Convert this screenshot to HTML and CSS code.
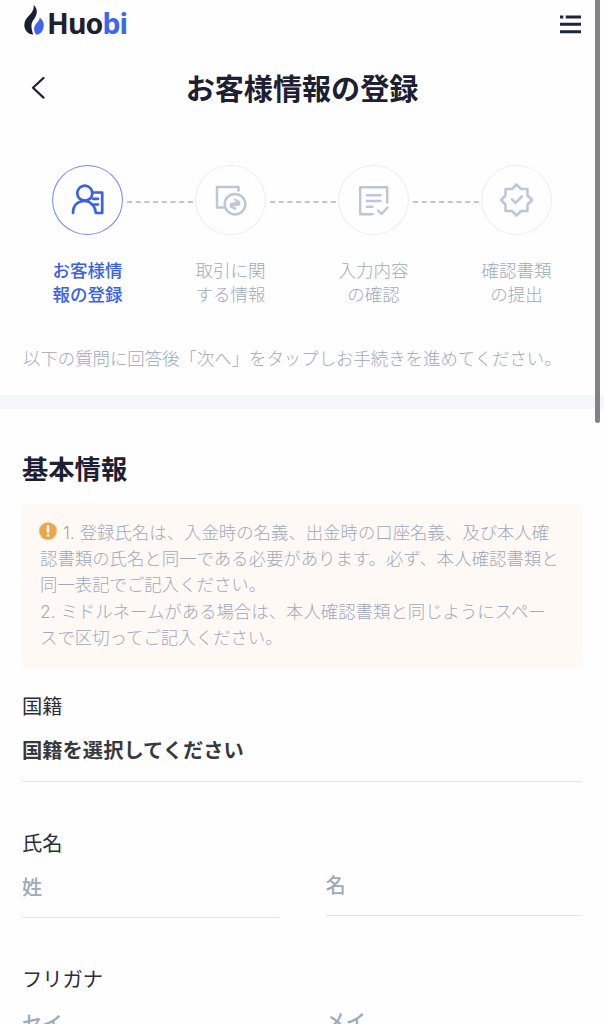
FILE: index.html
```html
<!DOCTYPE html>
<html lang="ja">
<head>
<meta charset="utf-8">
<title>お客様情報の登録</title>
<link rel="stylesheet" href="styles.css">
</head>
<body>
<header class="topbar">
  <div class="logo">
    <svg class="flame" width="22" height="32" viewBox="0 0 22 32"><path fill="#1b2030" d="M9.800 1C13.300 4.500 13.600 8.500 11.600 12.500C9.600 16.200 7.400 18 7.400 21.500C7.500 25 8.300 27.500 9.200 30.800C3.700 30.100.3 26 .3 21.300C.3 17.300 2 14.600 5.100 11.600C8.600 8.200 10.100 5 9.800 1Z"/><path fill="#3d65ee" d="M15.700 13.500C19 16 20.200 19 19.700 22.600C19.200 27.200 16.300 30.600 12.300 30.800C10 27.500 9.200 24.100 11.200 20.900C12.800 18.400 15.300 17.300 15.700 13.500Z"/></svg>
    <span class="wordmark">Huo<span class="wordmark-blue">bi</span></span>
  </div>
  <svg class="menu" width="21" height="19" viewBox="0 0 21 19" fill="#1c2440"><path d="M0 .5h3.300v3H0zM5.700 .5H21v3H5.700zM0 7.800h21v3H0zM0 15.200h21v3H0z"/></svg>
</header>
<div class="titlebar">
  <svg class="back" width="14" height="24" viewBox="0 0 14 24"><path d="M12.500 2L2 11.800L12.500 21.600" fill="none" stroke="#1c2030" stroke-width="2.200" stroke-linecap="round" stroke-linejoin="round"/></svg>
  <h1 class="title">お客様情報の登録</h1>
</div>
<div class="steps">
  <div class="step active">
    <div class="circle"><svg width="34" height="32" viewBox="0 0 34 32" fill="none" stroke="currentColor" stroke-width="2.700" stroke-linecap="round" stroke-linejoin="round"><circle cx="13.800" cy="9.200" r="7.500"/><path d="M2 29C2 21.500 6.500 17 13.300 17C20 17 24 22 25 29H31.200V8.500H22.500M22 14.800H27M20.500 20.500H27"/></svg></div>
    <p class="step-label">お客様情<br>報の登録</p>
  </div>
  <svg class="link" width="66" height="2" viewBox="0 0 66 2"><path d="M0 1h66"/></svg>
  <div class="step">
    <div class="circle"><svg width="34" height="32" viewBox="0 0 34 32" fill="none" stroke="currentColor" stroke-width="2.500" stroke-linecap="round" stroke-linejoin="round"><path d="M24.500 6.500V3H3V23.500H9"/><circle cx="21" cy="20.200" r="10.300"/><path stroke-width="2.200" d="M21.800 15.700L25.800 19.200L16.800 19.200M20.200 24.700L16.200 21.200L25.200 21.200" transform="rotate(-12 21 20.200)"/></svg></div>
    <p class="step-label">取引に関<br>する情報</p>
  </div>
  <svg class="link" width="66" height="2" viewBox="0 0 66 2"><path d="M0 1h66"/></svg>
  <div class="step">
    <div class="circle"><svg width="34" height="32" viewBox="0 0 34 32" fill="none" stroke="currentColor" stroke-width="2.400" stroke-linecap="round" stroke-linejoin="round"><path d="M15.500 30.200H3.200V3.200H30.200V18.500M10 11.300H23.500M10 17H23.500M10 22.800H15.500M21 26.500L24.500 30L30.500 23.500"/></svg></div>
    <p class="step-label">入力内容<br>の確認</p>
  </div>
  <svg class="link" width="66" height="2" viewBox="0 0 66 2"><path d="M0 1h66"/></svg>
  <div class="step">
    <div class="circle"><svg width="34" height="34" viewBox="0 0 34 34" fill="none" stroke="currentColor" stroke-width="2.500" stroke-linecap="round" stroke-linejoin="round"><path d="M16.500 1.500L21 6H27.500V12.500L32 17L27.500 21.500V28H21L16.500 32.500L12 28H5.500V21.500L1 17L5.500 12.500V6H12Z"/><path d="M12 16.300L15.500 19.800L21.800 13.500"/></svg></div>
    <p class="step-label">確認書類<br>の提出</p>
  </div>
</div>
<p class="intro">以下の質問に回答後「次へ」をタップしお手続きを進めてください。</p>
<div class="divider"></div>
<main class="form">
  <h2 class="heading">基本情報</h2>
  <div class="notice">
    <p class="notice-line"><svg class="alert" width="18" height="18" viewBox="0 0 18 18"><circle cx="9" cy="9" r="8.800" fill="#eda64b"/><path d="M9 4.300V9.700M9 13.300V13.500" stroke="#fff" stroke-width="2.600" stroke-linecap="round"/></svg>1. 登録氏名は、入金時の名義、出金時の口座名義、及び本人確</p>
    <p class="notice-line">認書類の氏名と同一である必要があります。必ず、本人確認書類と</p>
    <p class="notice-line">同一表記でご記入ください。</p>
    <p class="notice-line">2. ミドルネームがある場合は、本人確認書類と同じようにスペー</p>
    <p class="notice-line">スで区切ってご記入ください。</p>
  </div>
  <section class="field">
    <div class="label">国籍</div>
    <div class="value selected">国籍を選択してください</div>
  </section>
  <section class="field">
    <div class="label">氏名</div>
    <div class="pair"><div class="value">姓</div><div class="value raised">名</div></div>
  </section>
  <section class="field">
    <div class="label">フリガナ</div>
    <div class="pair"><div class="value">セイ</div><div class="value raised">メイ</div></div>
  </section>
</main>
<div class="scrollbar"></div>
</body>
</html>
```
FILE: styles.css
```css
* { box-sizing: border-box; }
body {
  margin: 0;
  width: 604px;
  height: 1024px;
  overflow: hidden;
  position: relative;
  background: #fefefe;
  color: #1c2030;
  font-family: "Noto Sans CJK JP", sans-serif;
}
h1, h2, p { margin: 0; }
svg { display: block; flex: none; }
.topbar {
  display: flex;
  justify-content: space-between;
  align-items: flex-start;
  height: 50px;
  padding: 4px 23px 0 24px;
}
.logo { display: flex; align-items: flex-start; gap: 1px; }
.wordmark {
  font-family: "Noto Sans", sans-serif;
  font-size: 28.500px;
  font-weight: 700;
  line-height: 38px;
  letter-spacing: -0.900px;
}
.wordmark-blue { color: #3d65ee; }
.menu { margin-top: 11px; }
.titlebar {
  display: grid;
  grid-template-columns: 14px 1fr 14px;
  align-items: center;
  height: 76px;
  padding: 0 31px 0 31px;
}
.title { font-size: 29.100px; font-weight: 700; text-align: center; line-height: 44px; margin-top: -2px; }
.steps { display: flex; padding: 39px 52px 0; height: 218px; justify-content: space-between; }
.step { width: 71px; color: #bcc6d6; }
.active { color: #3961e8; }
.circle {
  display: flex;
  align-items: center;
  justify-content: center;
  width: 71px;
  height: 70px;
  border: 1px solid #ededf0;
  border-radius: 50%;
}
.active .circle { border-color: #6c8bf3; }
.step-label {
  margin-top: 23px;
  font-size: 17.500px;
  font-weight: 300;
  line-height: 23.500px;
  text-align: center;
  white-space: nowrap;
  color: #9fa9bc;
}
.active .step-label { font-weight: 500; color: #3961e8; }
.link {
  margin: 36px -1px 0 1px;
  stroke: #b0b1bd;
  stroke-width: 1.500;
  stroke-dasharray: 5 3.700;
}
.intro {
  height: 51px;
  padding-left: 23px;
  font-size: 17.400px;
  font-weight: 300;
  line-height: 28px;
  color: #9fa9bc;
  white-space: nowrap;
}
.divider { height: 14px; background: #f5f6f8; }
.form { padding: 39px 22px 0; }
.heading { font-size: 26.300px; font-weight: 700; line-height: 40px; }
.notice {
  margin-top: 15px;
  height: 165px;
  padding: 17px 18px;
  border-radius: 2px;
  background: #fef9f5;
}
.notice-line {
  display: flex;
  align-items: center;
  gap: 6px;
  height: 26.200px;
  font-family: Inter, "Noto Sans CJK JP", sans-serif;
  font-size: 17.400px;
  font-weight: 300;
  line-height: 26.200px;
  color: #9fa9bc;
  white-space: nowrap;
}
.alert { margin: -5px 0 0 -1px; }
.field { height: 136px; }
.field:first-of-type { margin-top: 20px; height: 137px; }
.label { font-size: 20.300px; font-weight: 400; line-height: 34px; color: #2a2e3c; }
.value {
  flex: 1;
  height: 59px;
  padding-top: 12px;
  border-bottom: 1px solid #e2e4ec;
  font-size: 20.200px;
  font-weight: 500;
  line-height: 32px;
  color: #9faab8;
}
.selected { height: 60px; padding-top: 11px; font-size: 20.300px; font-weight: 700; color: #38393d; }
.pair { display: flex; gap: 47px; align-items: flex-start; }
.raised { height: 57px; padding-top: 10px; }
.scrollbar {
  position: absolute;
  top: -5px;
  left: 595px;
  width: 5px;
  height: 428px;
  border-radius: 3px;
  background: #838383;
}
```
